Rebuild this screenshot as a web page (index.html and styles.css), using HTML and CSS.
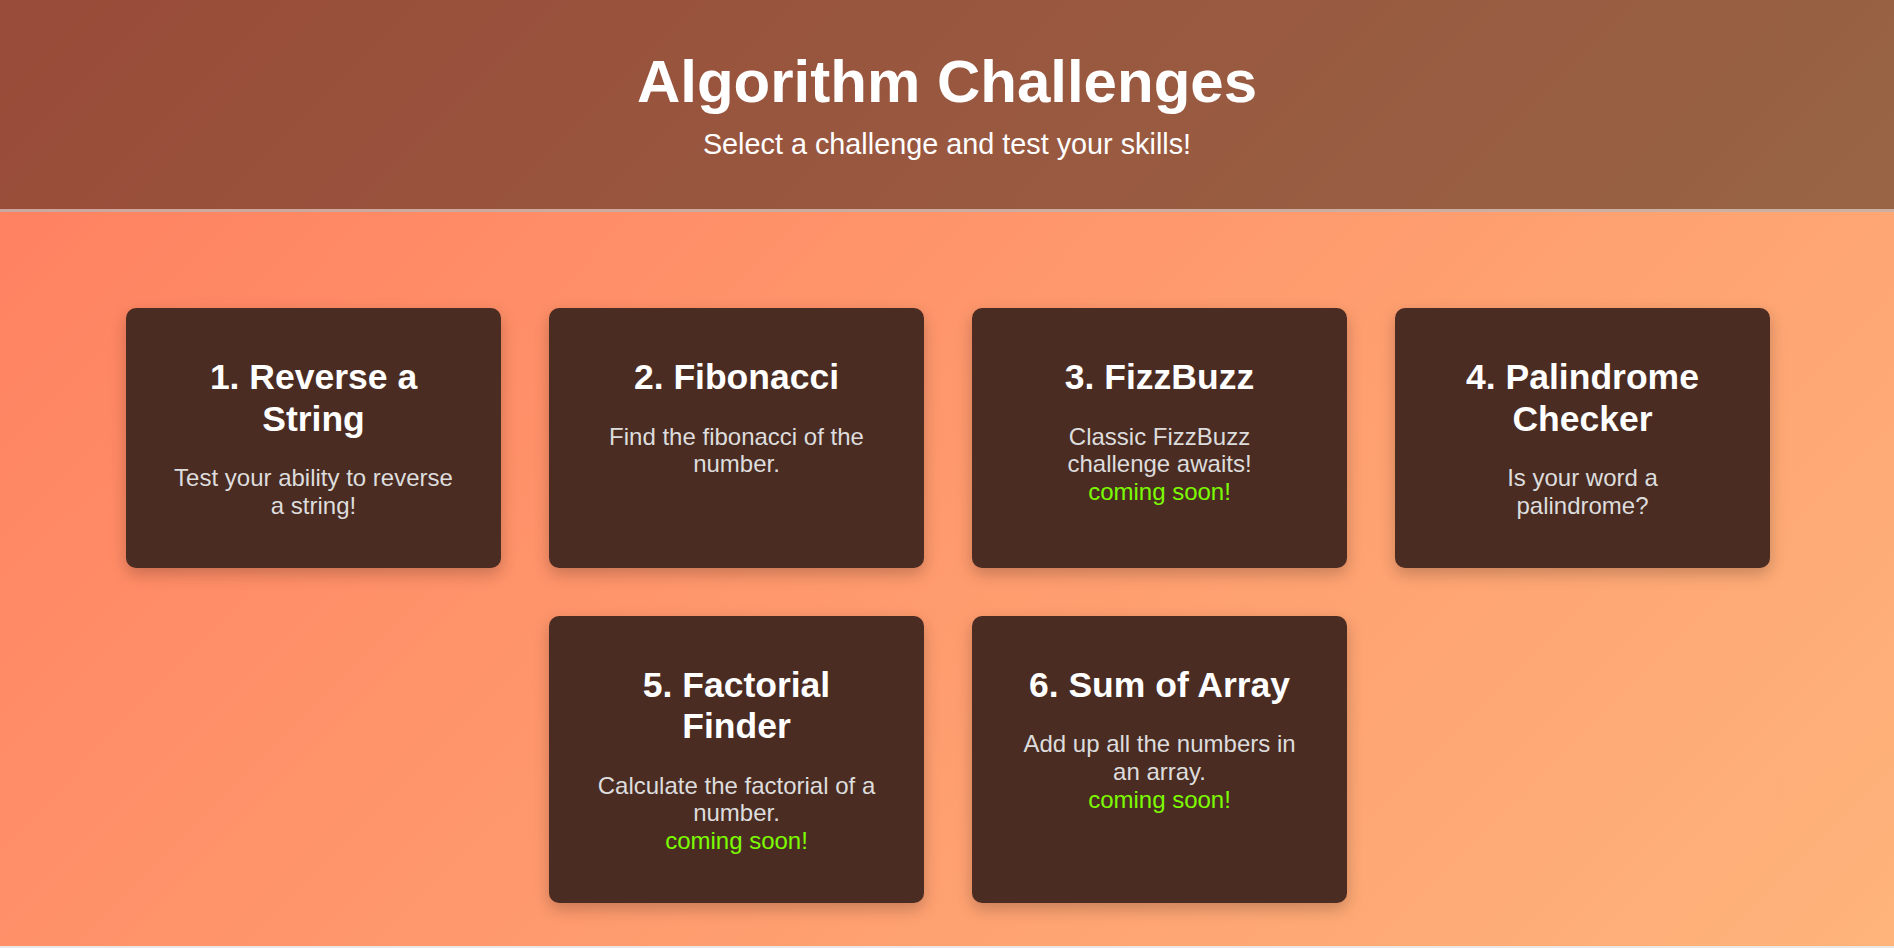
FILE: index.html
```html
<!DOCTYPE html>
<html lang="en">
<head>
<meta charset="utf-8">
<title>Algorithm Challenges</title>
<link rel="stylesheet" href="styles.css">
</head>
<body>
<div class="app">
  <header class="hero">
    <h1 class="hero-title">Algorithm Challenges</h1>
    <p class="hero-sub">Select a challenge and test your skills!</p>
  </header>
  <main class="board">
    <div class="grid">
      <a class="card" href="#">
        <h2 class="card-title">1. Reverse a String</h2>
        <p class="card-desc">Test your ability to reverse a string!</p>
      </a>
      <a class="card" href="#">
        <h2 class="card-title">2. Fibonacci</h2>
        <p class="card-desc">Find the fibonacci of the number.</p>
      </a>
      <a class="card" href="#">
        <h2 class="card-title">3. FizzBuzz</h2>
        <p class="card-desc">Classic FizzBuzz challenge awaits!<span class="soon">coming soon!</span></p>
      </a>
      <a class="card" href="#">
        <h2 class="card-title">4. Palindrome Checker</h2>
        <p class="card-desc">Is your word a palindrome?</p>
      </a>
      <a class="card" href="#">
        <h2 class="card-title">5. Factorial Finder</h2>
        <p class="card-desc">Calculate the factorial of a number.<span class="soon">coming soon!</span></p>
      </a>
      <a class="card" href="#">
        <h2 class="card-title">6. Sum of Array</h2>
        <p class="card-desc">Add up all the numbers in an array.<span class="soon">coming soon!</span></p>
      </a>
    </div>
  </main>
</div>
</body>
</html>
```

FILE: styles.css
```css
* {
  box-sizing: border-box;
}

html, body {
  margin: 0;
  padding: 0;
}

body {
  background: #ebe7e3;
  font-family: "Liberation Sans", Arial, sans-serif;
}

.app {
  height: 946px;
  background: linear-gradient(135deg, #ff7e5f, #feb47b);
  display: flex;
  flex-direction: column;
}

.hero {
  background: rgba(0, 0, 0, 0.4);
  border-bottom: 3px solid rgba(255, 255, 255, 0.5);
  padding: 47px 0 48px;
  text-align: center;
  color: #fff;
}

.hero-title {
  margin: 0 0 12px;
  font-size: 60px;
  font-weight: bold;
  line-height: normal;
}

.hero-sub {
  margin: 0;
  font-size: 28.8px;
  line-height: normal;
}

.board {
  padding: 96px 0 0 2px;
}

.grid {
  display: flex;
  flex-wrap: wrap;
  justify-content: center;
  gap: 48px;
}

.card {
  width: 375px;
  background: #4b2c22;
  border-radius: 10px;
  padding: 49px 45px 48px;
  box-shadow: 0 6px 16px rgba(0, 0, 0, 0.22);
  text-align: center;
  text-decoration: none;
  color: #fff;
}

.card-title {
  margin: 0 0 24px;
  font-size: 35.5px;
  font-weight: bold;
  line-height: 41.5px;
  color: #fff;
}

.card-desc {
  margin: 0;
  font-size: 24px;
  line-height: 27.8px;
  color: #dddddd;
}

.soon {
  display: block;
  color: #7cfc00;
}
```
